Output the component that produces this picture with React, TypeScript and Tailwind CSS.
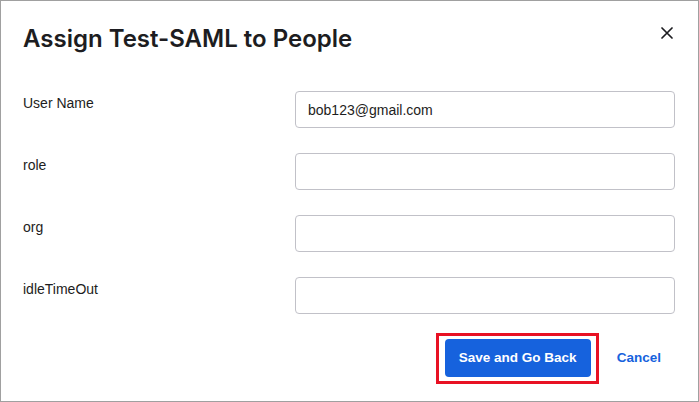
import React from 'react';

const fields = [
  { label: 'User Name', value: 'bob123@gmail.com' },
  { label: 'role', value: '' },
  { label: 'org', value: '' },
  { label: 'idleTimeOut', value: '' },
];

export default function App() {
  return (
    <div className="w-[699px] h-[402px] bg-white border border-[#a0a0a0] pt-[22px] pl-[22px] pr-[23px] flex flex-col text-[#1d1d21] font-['Liberation_Sans',Arial,sans-serif]">
      {/* header */}
      <div className="flex items-start justify-between">
        <h1 className="text-[24px] leading-8 font-semibold font-['Inter',sans-serif]">
          Assign Test-SAML to People
        </h1>
        <button className="mt-[4px] mr-[2px] w-[12px] h-[12px] text-[#1d1d21]">
          <svg viewBox="0 0 12 12" width="12" height="12" fill="none" stroke="currentColor" strokeWidth="1.7" strokeLinecap="round">
            <path d="M1 1l10 10M11 1L1 11" />
          </svg>
        </button>
      </div>

      {/* form */}
      <div className="mt-[36px] flex flex-col gap-[25px]">
        {fields.map((f) => (
          <div key={f.label} className="flex items-start">
            <label className="w-[272px] mt-[2px] text-[14px] leading-5">{f.label}</label>
            <input
              readOnly
              value={f.value}
              className="w-[380px] h-[37px] px-[12px] border border-[#c1c1c8] rounded-[4px] text-[14px] text-[#1d1d21] outline-none"
            />
          </div>
        ))}
      </div>

      {/* footer */}
      <div className="mt-[25px] flex items-center justify-end">
        <div className="relative">
          <button className="w-[146px] h-[38px] rounded-[4px] bg-[#1662dd] text-white text-[13.5px] font-bold">
            Save and Go Back
          </button>
          <div className="absolute -left-[9px] -right-[8px] -top-[6px] -bottom-[7px] border-[3px] border-[#e81123] pointer-events-none" />
        </div>
        <button className="ml-[12px] px-[14px] h-[38px] text-[13.5px] font-bold text-[#1662dd]">
          Cancel
        </button>
      </div>
    </div>
  );
}
